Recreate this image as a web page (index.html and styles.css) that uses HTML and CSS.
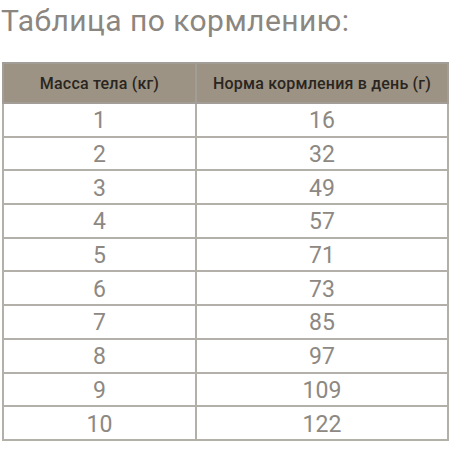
FILE: index.html
```html
<!DOCTYPE html>
<html lang="ru">
<head>
<meta charset="utf-8">
<link rel="stylesheet" href="styles.css">
</head>
<body>
<h1 class="title">Таблица по кормлению:</h1>
<table class="feed">
  <thead>
    <tr><th>Масса тела (кг)</th><th>Норма кормления в день (г)</th></tr>
  </thead>
  <tbody>
    <tr><td>1</td><td>16</td></tr>
    <tr><td>2</td><td>32</td></tr>
    <tr><td>3</td><td>49</td></tr>
    <tr><td>4</td><td>57</td></tr>
    <tr><td>5</td><td>71</td></tr>
    <tr><td>6</td><td>73</td></tr>
    <tr><td>7</td><td>85</td></tr>
    <tr><td>8</td><td>97</td></tr>
    <tr><td>9</td><td>109</td></tr>
    <tr><td>10</td><td>122</td></tr>
  </tbody>
</table>
</body>
</html>
```
FILE: styles.css
```css
html, body {
  margin: 0;
  padding: 0;
  background: #ffffff;
}
body {
  font-family: Roboto, "Noto Sans", sans-serif;
}
.title {
  margin: 0 0 0 1px;
  padding-top: 3px;
  height: 59px;
  font-size: 30px;
  font-weight: 400;
  line-height: 36px;
  color: #8b867f;
  letter-spacing: 0.45px;
}
.feed {
  margin-left: 2px;
  width: 447px;
  border-collapse: collapse;
  border: 2px solid #a29d96;
}
.feed th {
  height: 38px;
  padding: 0;
  background: #9c9384;
  color: #2a2520;
  font-size: 16px;
  font-weight: 500;
  letter-spacing: 0.2px;
  border: 2px solid #a29d96;
}
.feed th:first-child,
.feed td:first-child {
  width: 191px;
}
.feed td {
  height: 28.7px;
  padding: 3px 0 0;
  text-align: center;
  font-size: 23px;
  font-weight: 400;
  color: #8d8882;
  border: 2px solid #b3afa9;
  line-height: 28px;
}
```
